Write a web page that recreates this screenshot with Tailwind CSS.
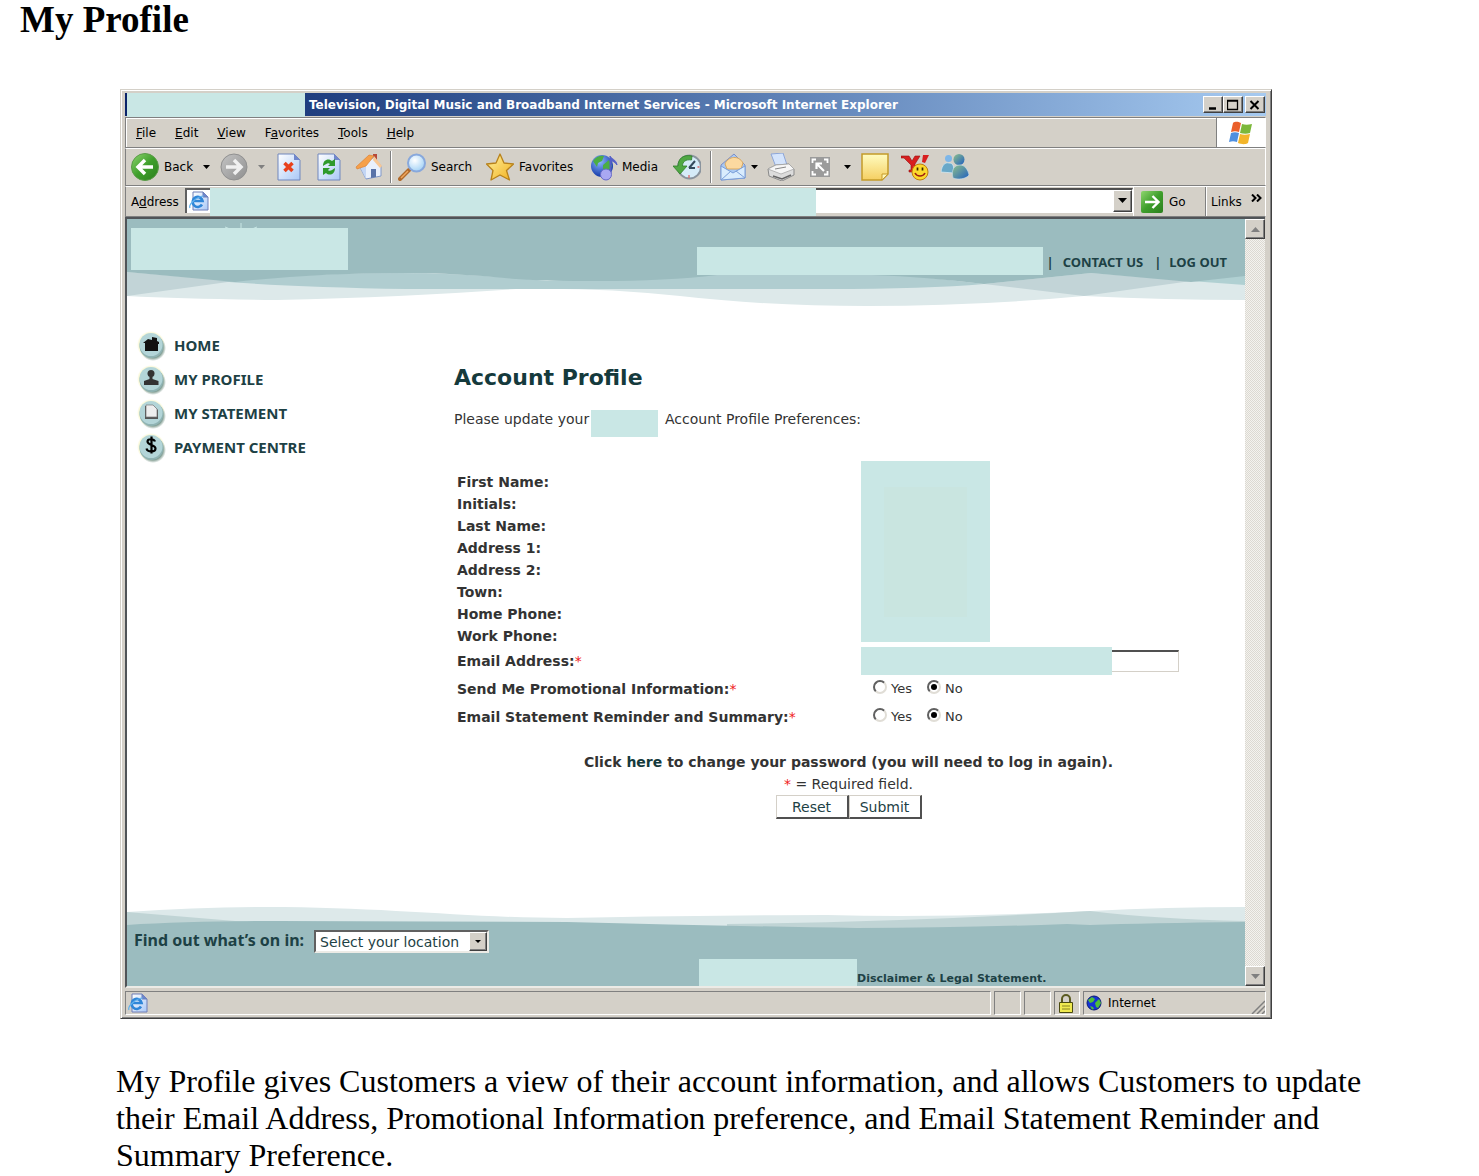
<!DOCTYPE html>
<html lang="en">
<head>
<meta charset="utf-8">
<title>My Profile</title>
<script src="https://cdn.jsdelivr.net/npm/@tailwindcss/browser@4"></script>
</head>
<body class="bg-white text-black">
<svg class="absolute h-0 w-0" aria-hidden="true">
  <defs>
    <linearGradient id="gGreen" x1="0" y1="0" x2="1" y2="1"><stop offset="0" stop-color="#8fd66f"/><stop offset=".5" stop-color="#3f9f2c"/><stop offset="1" stop-color="#2b7f1d"/></linearGradient>
    <linearGradient id="gGray" x1="0" y1="0" x2="1" y2="1"><stop offset="0" stop-color="#c4c4c4"/><stop offset="1" stop-color="#8f8f8f"/></linearGradient>
    <linearGradient id="gPage" x1="0" y1="0" x2="1" y2="1"><stop offset="0" stop-color="#ffffff"/><stop offset="1" stop-color="#a9c8f7"/></linearGradient>
    <linearGradient id="gGold" x1="0" y1="0" x2="1" y2="1"><stop offset="0" stop-color="#fff3a0"/><stop offset="1" stop-color="#f2b01e"/></linearGradient>
    <linearGradient id="gNote" x1="0" y1="0" x2="0" y2="1"><stop offset="0" stop-color="#fffcc0"/><stop offset="1" stop-color="#f5cf62"/></linearGradient>
    <radialGradient id="gGlobe" cx=".4" cy=".3" r=".7"><stop offset="0" stop-color="#8db9ff"/><stop offset="1" stop-color="#1238a8"/></radialGradient>
    <radialGradient id="gLens" cx=".4" cy=".35" r=".7"><stop offset="0" stop-color="#ffffff"/><stop offset="1" stop-color="#9fd0f5"/></radialGradient>
    <linearGradient id="gMan" x1="0" y1="0" x2="1" y2="1"><stop offset="0" stop-color="#8fc08a"/><stop offset="1" stop-color="#1f5fc0"/></linearGradient>
    <radialGradient id="gHalo"><stop offset=".8" stop-color="#f7f5c4"/><stop offset="1" stop-color="#f7f5c4" stop-opacity="0"/></radialGradient>
    <radialGradient id="gShade"><stop offset=".75" stop-color="#7f9b90"/><stop offset="1" stop-color="#7f9b90" stop-opacity="0"/></radialGradient>
    <pattern id="dots" width="2" height="2" patternUnits="userSpaceOnUse"><rect width="2" height="2" fill="#f4f3ef"/><rect width="1" height="1" fill="#dcd9d2"/><rect x="1" y="1" width="1" height="1" fill="#dcd9d2"/></pattern>
    <symbol id="iePage" viewBox="0 0 20 20">
      <path d="M4 1h10l5 5v13H4z" fill="url(#gPage)" stroke="#6f7fb8"/><path d="M14 1v5h5" fill="#6f86cc" stroke="#6f7fb8"/>
      <path d="M13 13.500a5 5 0 1 1 .6-3.500H4.500" fill="none" stroke="#2f86d8" stroke-width="2.600"/>
      <path d="M1 17C-1 13 9 5 15 5" fill="none" stroke="#5fb0ee" stroke-width="1.200"/>
    </symbol>
    <symbol id="disc" viewBox="0 0 30 30">
      <circle cx="14" cy="14" r="14" fill="url(#gHalo)"/><circle cx="16" cy="17" r="13" fill="url(#gShade)"/>
      <circle cx="14.500" cy="15" r="12" fill="#8fb3b3"/><circle cx="14" cy="13.500" r="11.500" fill="#b3d5d8"/>
    </symbol>
    <symbol id="globe" viewBox="0 0 16 16">
      <circle cx="8" cy="8" r="7" fill="#1433d6" stroke="#0b1d70"/><path d="M2 5l4-3 3 2-2 3-3 1zM9 8l4-4 2 4-3 5-2-1zM4 11l3 1 1 2-2 .5z" fill="#4fbf3a"/>
    </symbol>
  </defs>
</svg>

<h1 class="pl-5 font-['Liberation_Serif',serif] text-[37px] leading-[40px] font-bold">My Profile</h1>

<main class="mt-[49px] mr-[207px] ml-[120px] flex flex-col border border-t-[#d4d0c8] border-r-[#404040] border-b-[#404040] border-l-[#d4d0c8] bg-[#d4d0c8] px-1 pt-[3px] font-['DejaVu_Sans',sans-serif] text-[12px] shadow-[inset_1px_1px_0_#ffffff,inset_-1px_-1px_0_#808080]">

  <header class="mr-px flex h-[23px] items-center bg-linear-to-r from-[#0a246a] to-[#a6caf0]">
    <div class="ml-0.5 h-[25px] w-[178px] self-start bg-[#c9e7e5]"></div>
    <p class="ml-1 grow font-bold whitespace-nowrap text-white">Television, Digital Music and Broadband Internet Services - Microsoft Internet Explorer</p>
    <div class="mr-px flex text-black">
      <button aria-label="Minimize" class="flex h-[17px] w-5 items-center justify-center border border-t-white border-r-[#404040] border-b-[#404040] border-l-white bg-[#d4d0c8] shadow-[inset_-1px_-1px_0_#808080]"><svg class="h-3 w-3" viewBox="0 0 12 12"><path d="M2 9.500h7" stroke="#000" stroke-width="2.500"/></svg></button>
      <button aria-label="Maximize" class="flex h-[17px] w-5 items-center justify-center border border-t-white border-r-[#404040] border-b-[#404040] border-l-white bg-[#d4d0c8] shadow-[inset_-1px_-1px_0_#808080]"><svg class="h-3 w-3" viewBox="0 0 12 12"><path d="M.5 1.500h10v9H.5zM.5 2h10" fill="none" stroke="#000" stroke-width="1.300"/></svg></button>
      <button aria-label="Close" class="ml-0.5 flex h-[17px] w-5 items-center justify-center border border-t-white border-r-[#404040] border-b-[#404040] border-l-white bg-[#d4d0c8] shadow-[inset_-1px_-1px_0_#808080]"><svg class="h-3 w-3" viewBox="0 0 12 12"><path d="M1.500 2l8 8M9.500 2l-8 8" stroke="#000" stroke-width="2"/></svg></button>
    </div>
  </header>

  <nav aria-label="Menu bar" class="mt-px mr-px flex h-[31px] border border-[#808080] border-r-white">
    <div class="flex grow items-center gap-[19px] border-t border-l border-white pl-[9px]">
      <button><u>F</u>ile</button><button><u>E</u>dit</button><button><u>V</u>iew</button><button>F<u>a</u>vorites</button><button><u>T</u>ools</button><button><u>H</u>elp</button>
    </div>
    <div class="flex w-[49px] items-center justify-center border-l border-[#808080] bg-white">
      <svg class="h-6 w-6" viewBox="0 0 24 24"><path d="M4 2c3-2 5-1 8 0l-2 9c-3-1-5-1-8 0z" fill="#ea5f2a"/><path d="M13 3c3 1 6 1 10 0l-2 9c-3 1-6 1-10 0z" fill="#7cb83a"/><path d="M2 12c3-1 5-1 8 0l-2 9c-3-1-5-1-8 0z" fill="#4e8fe0"/><path d="M11 13c3 1 6 1 10 0l-2 9c-3 2-7 1-10 0z" fill="#f3b52a"/></svg>
    </div>
  </nav>

  <div role="toolbar" aria-label="Standard buttons" class="mr-px flex h-[38px] items-center border border-t-white border-r-white border-b-[#808080] border-l-[#808080] pl-[5px]">
    <button class="flex w-[69px] shrink-0 items-center gap-[5px]"><svg class="h-7 w-7 shrink-0" viewBox="0 0 28 28"><circle cx="14" cy="14" r="13.500" fill="url(#gGreen)" stroke="#5a9a48"/><path d="M22 14H8M14 7l-7 7 7 7" fill="none" stroke="#fff" stroke-width="3.500"/></svg>Back</button>
    <button aria-label="Back history" class="w-3 shrink-0"><svg class="mx-auto h-1 w-[7px]" viewBox="0 0 7 4"><path d="M0 0h7L3.500 4z"/></svg></button>
    <button aria-label="Forward" class="ml-2 shrink-0"><svg class="h-7 w-7" viewBox="0 0 28 28"><circle cx="14" cy="14" r="13" fill="url(#gGray)" stroke="#909090"/><path d="M6 14h14M14 7l7 7-7 7" fill="none" stroke="#f0f0f0" stroke-width="3.500"/></svg></button>
    <button aria-label="Forward history" class="ml-[7px] w-3 shrink-0"><svg class="mx-auto h-1 w-[7px]" viewBox="0 0 7 4"><path d="M0 0h7L3.500 4z" fill="#808080"/></svg></button>
    <button aria-label="Stop" class="ml-2 shrink-0"><svg class="h-7 w-7" viewBox="0 0 28 28"><path d="M3 1h16l6 6v20H3z" fill="url(#gPage)" stroke="#7187bd"/><path d="M19 1v6h6z" fill="#7187cc"/><path d="M9.500 10l8 8M17.500 10l-8 8" stroke="#e8401c" stroke-width="3.500"/></svg></button>
    <button aria-label="Refresh" class="ml-3 shrink-0"><svg class="h-7 w-7" viewBox="0 0 28 28"><path d="M3 1h16l6 6v20H3z" fill="url(#gPage)" stroke="#7187bd"/><path d="M19 1v6h6z" fill="#7187cc"/><path d="M8 13c0-7 6-8 9-5l3-2v7h-7l2-2c-2-2-4 0-7 2zM20 15c0 7-6 8-9 5l-3 2v-7h7l-2 2c2 2 4 0 7-2z" fill="#2f9a2c"/></svg></button>
    <button aria-label="Home" class="ml-3 shrink-0"><svg class="h-7 w-7" viewBox="0 0 28 28"><path d="M18 1h4v9h-4z" fill="#b5493a"/><path d="M5 14l6 12 15-3V13l-7-9z" fill="#e9f0fc" stroke="#8098c8"/><path d="M5 14l6 12V13z" fill="#c3d6f5"/><path d="M1 14L14 2l5 1-8 10-9 3z" fill="#f6a04a" stroke="#d8782a" stroke-width=".6"/><path d="M19 3l8 10-2 2-7-8z" fill="#f8c794"/><path d="M16 16h5v8l-5 1z" fill="#5973a8"/></svg></button>
    <div class="ml-[7px] h-8 w-0.5 border-r border-l border-r-white border-l-[#808080]"></div>
    <button class="ml-[6px] flex w-[82px] shrink-0 items-center gap-[5px]"><svg class="h-7 w-7 shrink-0" viewBox="0 0 28 28"><path d="M2 26l9-9" stroke="#b06a2c" stroke-width="4" stroke-linecap="round"/><path d="M3 25l7-7" stroke="#f0a860" stroke-width="1.500"/><circle cx="18.500" cy="10" r="8.500" fill="url(#gLens)" stroke="#88a8dc" stroke-width="2"/></svg>Search</button>
    <button class="ml-[6px] flex w-[98px] shrink-0 items-center gap-[5px]"><svg class="h-7 w-7 shrink-0" viewBox="0 0 28 28"><path d="M14 1l4 9 9.500 1-7 6.500 3 9.500-9.500-5-9 5 2-9.500L.5 11l9.500-1z" fill="url(#gGold)" stroke="#b8821c" stroke-width="1.300" stroke-linejoin="round"/></svg>Favorites</button>
    <button class="ml-[6px] flex w-[76px] shrink-0 items-center gap-1"><svg class="h-7 w-7 shrink-0" viewBox="0 0 28 28"><circle cx="12" cy="13" r="11" fill="url(#gGlobe)"/><path d="M3 8c3-5 8-6 11-5l-2 5-4 2-1 4zM13 12l6-5 3 6-5 7-4-2z" fill="#4cae43"/><path d="M20 20V3c1 3 6 3 7 9-2-3-4-4-6-4v12z" fill="#5560c8" stroke="#5560c8"/><circle cx="16" cy="21.500" r="5.500" fill="#a9a8f2" stroke="#6668c8"/></svg>Media</button>
    <button aria-label="History" class="ml-[7px] shrink-0"><svg class="h-7 w-7" viewBox="0 0 28 28"><circle cx="16.500" cy="14" r="11.500" fill="#d5ebf8" stroke="#8a949e" stroke-width="2"/><path d="M16 15l6-7M16 15h6" stroke="#344a5c" stroke-width="2"/><path d="M16 22v3M24.500 14h2" stroke="#d66" stroke-width="1.300"/><path d="M19 3C10 1 5 6 5 13H0l7 8 7-8H9.500c0-4 3-7 9-6z" fill="#50a844" stroke="#2f7d2a" stroke-width=".8"/></svg></button>
    <div class="ml-[9px] h-8 w-0.5 border-r border-l border-r-white border-l-[#808080]"></div>
    <button aria-label="Mail" class="ml-[7px] shrink-0"><svg class="h-7 w-7" viewBox="0 0 28 28"><path d="M2 12L15 1l11 11v13L2 27z" fill="#a9c8f2" stroke="#7b8fc8"/><path d="M6 11c3-8 14-9 18-1l-2 6H8z" fill="#fbd9a0" stroke="#d8a860"/><path d="M2 13l12 7 12-7v12L2 27z" fill="#d9ecfd" stroke="#7b9fd8"/><path d="M2 27l10-9M26 25l-9-7" stroke="#7b9fd8"/></svg></button>
    <button aria-label="Mail options" class="ml-px w-3 shrink-0"><svg class="mx-auto h-1 w-[7px]" viewBox="0 0 7 4"><path d="M0 0h7L3.500 4z"/></svg></button>
    <button aria-label="Print" class="ml-[7px] shrink-0"><svg class="h-7 w-7" viewBox="0 0 28 28"><path d="M4 1l12-1 4 12-11 2z" fill="#d4e4fc" stroke="#8da6d8"/><path d="M1 16l8-4 13-1 5 5v6l-12 6-13-5z" fill="#dcdcdc" stroke="#8a8a8a"/><path d="M1 16l13 5 13-5-5-5-13 1z" fill="#f6f6f6" stroke="#a0a0a0" stroke-width=".7"/><path d="M6 23l9 3 9-4" stroke="#666" fill="none" stroke-width="1.500"/><path d="M8 16l11-2" stroke="#888"/></svg></button>
    <button aria-label="Edit" class="ml-[11px] shrink-0"><svg class="h-7 w-7" viewBox="0 0 28 28"><path d="M4 4h20v20H4z" fill="#9b9b9b"/><path d="M6.500 10V6.500H10M18 6.500h3.500V10M21.500 18v3.500H18M10 21.500H6.500V18" fill="none" stroke="#fff" stroke-width="1.800"/><path d="M18 18L11 11M10.500 16v-5.500H16" fill="none" stroke="#fff" stroke-width="2.200"/></svg></button>
    <button aria-label="Edit options" class="ml-[7px] w-3 shrink-0"><svg class="mx-auto h-1 w-[7px]" viewBox="0 0 7 4"><path d="M0 0h7L3.500 4z"/></svg></button>
    <button aria-label="Discuss" class="ml-2 shrink-0"><svg class="h-7 w-7" viewBox="0 0 28 28"><path d="M1 1h26v20l-6 6H1z" fill="url(#gNote)" stroke="#c49a28" stroke-width="1.500"/><path d="M21 27v-6h6z" fill="#fff6b8" stroke="#c49a28"/></svg></button>
    <button aria-label="Messenger services" class="ml-3 shrink-0"><svg class="h-7 w-7" viewBox="0 0 28 28"><path d="M0 3h8l3 5 3-5h5l-5 8v6h3v2H8v-2h2v-5L3 5H0z" fill="#d81f1f" stroke="#981010" stroke-width=".6"/><path d="M22 2l6 0-4 8-3-1z" fill="#d81f1f"/><circle cx="19" cy="19" r="8" fill="#fbd92c" stroke="#c08010"/><path d="M16.500 14.500v3M21.500 14.500v3" stroke="#3a2a00" stroke-width="1.700"/><path d="M14 20c2 4 8 4 10 0" fill="none" stroke="#a02010" stroke-width="1.600"/></svg></button>
    <button aria-label="Messenger" class="ml-3 shrink-0"><svg class="h-7 w-7" viewBox="0 0 28 28"><circle cx="7.500" cy="5.500" r="3.500" fill="#7db6e8"/><path d="M0 19c1-7 4-10 8-9 4 0 5 3 5 10z" fill="#69a8c8" stroke="#d8eef8" stroke-width=".7"/><circle cx="18" cy="6.500" r="5.500" fill="url(#gMan)"/><path d="M12 25c-2-8 1-13 7-13 5 0 8 5 9 10-3 4-11 5-16 3z" fill="url(#gMan)" stroke="#c8e0f0" stroke-width=".6"/></svg></button>
  </div>

  <form class="mr-px flex h-[31px] items-center border border-t-white border-r-white border-b-[#808080] border-l-[#808080]" onsubmit="return false">
    <label for="address" class="w-[59px] pl-[5px]">A<u>d</u>dress</label>
    <div class="flex h-7 grow items-start">
      <div class="flex h-[25px] w-[25px] items-center justify-center border-t-2 border-l-2 border-[#606060] bg-white"><svg class="h-5 w-5"><use href="#iePage"/></svg></div>
      <div class="h-7 w-[606px] bg-[#c9e7e5]"></div>
      <div class="flex h-[25px] grow border-t-2 border-r border-b border-t-[#505050] border-r-white border-b-white bg-white">
        <input id="address" type="text" class="h-full w-0 grow outline-none">
        <button aria-label="Show addresses" class="flex w-[19px] items-center justify-center border border-t-white border-r-[#404040] border-b-[#404040] border-l-white bg-[#d4d0c8] shadow-[inset_-1px_-1px_0_#808080]"><svg class="h-[5px] w-[9px]" viewBox="0 0 9 5"><path d="M0 0h9L4.500 5z"/></svg></button>
      </div>
    </div>
    <div class="flex h-full w-[72px] items-center gap-[6px] border-l border-white pl-[7px]">
      <svg class="h-[22px] w-[22px] shrink-0" viewBox="0 0 22 22"><rect width="22" height="22" rx="2" fill="url(#gGreen)"/><path d="M4 11h13M11.500 5l6 6-6 6" fill="none" stroke="#fff" stroke-width="2.400"/></svg><button>Go</button>
    </div>
    <div class="flex h-full w-[60px] items-center gap-[9px] border-l border-[#808080] pl-[5px] shadow-[inset_1px_0_0_#ffffff]">
      <span>Links</span><svg class="mb-2 h-2 w-[11px] shrink-0" viewBox="0 0 11 8"><path d="M1 .5L4.500 4 1 7.500M6 .5L9.500 4 6 7.500" fill="none" stroke="#000" stroke-width="2"/></svg>
    </div>
  </form>

  <div class="mr-0.5 flex border-t-2 border-b-2 border-l-2 border-t-[#505458] border-b-[#ecebe6] border-l-[#505458] bg-white">
    <div class="flex min-w-0 grow flex-col">
      <div class="relative h-[87px]">
        <svg class="absolute inset-0 h-full w-full" viewBox="0 0 1118 87" preserveAspectRatio="none">
          <path d="M0 0H1118V81Q1040 81 957 77Q850 87 740 87 640 87 553 77 470 68 389 70 280 78 150 81 60 80 0 77z" fill="#dde9ea"/>
          <path d="M0 53L108 62 0 77z" fill="#c2d4d7"/>
          <path d="M90 62Q190 54 273 54 340 54 420 62L553 54H760L857 65Q800 70 700 70H280Q160 68 90 62z" fill="#b0cdd0"/>
          <path d="M857 65L964 54 1064 62 957 77z" fill="#c2d4d7"/>
          <path d="M1050 61L1118 56V66z" fill="#b0d0d2"/>
          <path d="M0 0H1118V57L1064 63 964 54 857 65Q800 58 745 56L590 56Q540 62 470 62 420 62 389 60 320 53 273 54 190 54 108 63L0 53z" fill="#9bbcbf"/>
          <path d="M98 8l5 2M114 4v7M125 10l5-2" stroke="#c9e7e5"/>
        </svg>
        <div class="relative flex h-full justify-between pr-[18px]">
          <div class="mt-[9px] ml-1 h-[42px] w-[217px] bg-[#c9e7e5]"></div>
          <div class="mt-7 flex h-7 items-center font-['Noto_Sans',sans-serif] text-[13px] leading-7 font-bold text-[#1d4145]">
            <div class="h-7 w-[346px] bg-[#c9e7e5]"></div>
            <div class="flex pt-0.5 pl-[3px]"><span>|</span><a href="#" class="mr-[11px] ml-[9px]">CONTACT US</a><span>|</span><a href="#" class="ml-2">LOG OUT</a></div>
          </div>
        </div>
      </div>

      <div class="flex min-h-[600px]">
        <nav aria-label="Account" class="w-[327px] shrink-0 pt-[23px] pl-[10px] font-['Noto_Sans',sans-serif] text-[15px] font-bold text-[#1d4145]">
          <a href="#" class="flex h-[34px] items-start gap-[7px]"><svg class="mt-0.5 h-[30px] w-[30px]" viewBox="0 0 30 30"><use href="#disc"/><path d="M6 12l5-4 4 1V6l5 1v3l2 1v2h-1v7H8v-8z" fill="#111"/></svg><span class="leading-8">HOME</span></a>
          <a href="#" class="flex h-[34px] items-start gap-[7px]"><svg class="mt-0.5 h-[30px] w-[30px]" viewBox="0 0 30 30"><use href="#disc"/><circle cx="14" cy="8.500" r="3.500" fill="#333"/><path d="M12.500 10h3v4l6 2v4H7v-4l5.500-2z" fill="#333"/></svg><span class="leading-8">MY PROFILE</span></a>
          <a href="#" class="flex h-[34px] items-start gap-[7px]"><svg class="mt-0.5 h-[30px] w-[30px]" viewBox="0 0 30 30"><use href="#disc"/><path d="M8 7h9l4 4v9H8z" fill="#555"/><path d="M9 6h7l4 4v8H9z" fill="#eee" stroke="#777" stroke-width=".7"/></svg><span class="leading-8">MY STATEMENT</span></a>
          <a href="#" class="flex h-[34px] items-start gap-[7px]"><svg class="mt-0.5 h-[30px] w-[30px]" viewBox="0 0 30 30"><use href="#disc"/><path d="M18 8.500c-1-3-7.500-3-7.500 0 0 4 8 3 8 7 0 4-8 4-9 0M14.500 3.500v17" fill="none" stroke="#000" stroke-width="2.200"/></svg><span class="leading-8">PAYMENT CENTRE</span></a>
        </nav>

        <form class="min-w-0 grow text-[14px] text-[#333333]" onsubmit="return false">
          <h2 class="pt-[58px] text-[22px] leading-7 font-bold text-[#153a3c]">Account Profile</h2>
          <p class="mt-4 flex h-[27px] leading-[22px] whitespace-nowrap"><span class="w-[137px]">Please update your</span><span class="mt-0.5 mr-[7px] h-[27px] w-[67px] bg-[#c9e7e5]"></span>Account Profile Preferences:</p>
          <table class="mt-9 w-full border-collapse text-left leading-[22px]">
            <tbody class="[&_th]:p-0 [&_th]:pl-[3px] [&_th]:font-bold [&_td]:p-0">
              <tr class="h-[22px]"><th scope="row" class="w-[407px]">First Name:</th><td rowspan="8" class="relative"><div class="absolute -top-[10px] flex h-[181px] w-[129px] items-center justify-center bg-[#c9e7e5]"><div class="h-[130px] w-[83px] bg-[#c9e5e0]"></div></div></td></tr>
              <tr class="h-[22px]"><th scope="row">Initials:</th></tr>
              <tr class="h-[22px]"><th scope="row">Last Name:</th></tr>
              <tr class="h-[22px]"><th scope="row">Address 1:</th></tr>
              <tr class="h-[22px]"><th scope="row">Address 2:</th></tr>
              <tr class="h-[22px]"><th scope="row">Town:</th></tr>
              <tr class="h-[22px]"><th scope="row">Home Phone:</th></tr>
              <tr class="h-[22px]"><th scope="row">Work Phone:</th></tr>
              <tr class="h-[28px]"><th scope="row"><label for="email">Email Address:<span class="font-normal text-[#f02020]">*</span></label></th><td><div class="flex items-center"><div class="h-7 w-[251px] bg-[#c9e7e5]"></div><input id="email" type="text" class="h-[22px] w-[67px] border-t-2 border-r border-b border-t-[#505050] border-r-[#d4d0c8] border-b-[#d4d0c8] bg-white"></div></td></tr>
              <tr class="h-[28px]"><th scope="row">Send Me Promotional Information:<span class="font-normal text-[#f02020]">*</span></th><td>
                <div class="flex items-center pl-3 text-[13px]">
                  <input id="p1" name="promo" type="radio" class="mr-1 mb-1 h-[14px] w-[14px] appearance-none rounded-full border-2 border-t-[#606060] border-r-[#e0ddd6] border-b-[#e0ddd6] border-l-[#606060] checked:bg-black checked:bg-clip-content checked:p-0.5"><label for="p1" class="w-9">Yes</label>
                  <input id="p2" name="promo" type="radio" checked class="mr-1 mb-1 h-[14px] w-[14px] appearance-none rounded-full border-2 border-t-[#606060] border-r-[#e0ddd6] border-b-[#e0ddd6] border-l-[#606060] checked:bg-black checked:bg-clip-content checked:p-0.5"><label for="p2">No</label>
                </div></td></tr>
              <tr class="h-[27px]"><th scope="row">Email Statement Reminder and Summary:<span class="font-normal text-[#f02020]">*</span></th><td>
                <div class="flex items-center pl-3 text-[13px]">
                  <input id="s1" name="summary" type="radio" class="mr-1 mb-1 h-[14px] w-[14px] appearance-none rounded-full border-2 border-t-[#606060] border-r-[#e0ddd6] border-b-[#e0ddd6] border-l-[#606060] checked:bg-black checked:bg-clip-content checked:p-0.5"><label for="s1" class="w-9">Yes</label>
                  <input id="s2" name="summary" type="radio" checked class="mr-1 mb-1 h-[14px] w-[14px] appearance-none rounded-full border-2 border-t-[#606060] border-r-[#e0ddd6] border-b-[#e0ddd6] border-l-[#606060] checked:bg-black checked:bg-clip-content checked:p-0.5"><label for="s2">No</label>
                </div></td></tr>
            </tbody>
          </table>
          <div class="mt-[21px] pr-0.5 text-center leading-[22px]">
            <p class="font-bold">Click <a href="#" class="text-[#153a3c]">here</a> to change your password (you will need to log in again).</p>
            <p><span class="text-[#f02020]">*</span> = Required field.</p>
            <div class="flex justify-center">
              <button type="reset" class="h-6 w-[73px] border border-t-[#d4d0c8] border-r-2 border-r-[#505050] border-b-2 border-b-[#505050] border-l-[#d4d0c8] bg-white leading-5 text-[#1d4145]">Reset</button>
              <button type="submit" class="h-6 w-[73px] border border-t-[#d4d0c8] border-r-2 border-r-[#505050] border-b-2 border-b-[#505050] border-l-[#d4d0c8] bg-white leading-5 text-[#1d4145]">Submit</button>
            </div>
          </div>
        </form>
      </div>

      <footer class="relative h-[80px] text-[#1d4145]">
        <svg class="absolute inset-0 h-full w-full" viewBox="0 0 1118 80" preserveAspectRatio="none">
          <path d="M0 6Q70 1 139 1C260 1 340 12 440 12Q600 9 700 9 820 12 963 5 1040 1 1118 1V80H0z" fill="#dde9ea"/>
          <path d="M0 6L120 16V20H0z" fill="#c0d4d5"/>
          <path d="M600 18Q780 16 963 5 1030 13 1118 15V24H600z" fill="#c0d4d5"/>
          <path d="M0 19Q60 15 150 15L440 16Q600 20 730 22 830 22 940 18L963 19Q1020 17 1118 16V80H0z" fill="#9bbcbf"/>
        </svg>
        <div class="relative flex h-full flex-col justify-between">
          <div class="flex items-start pt-6 pl-[7px]">
            <label for="loc" class="w-[180px] font-['Noto_Sans',sans-serif] text-[16px] leading-5 font-bold">Find out what’s on in:</label>
            <div class="relative h-[23px] w-[175px] border-2 border-t-[#606060] border-r-[#ecebe6] border-b-[#ecebe6] border-l-[#606060] bg-white">
              <select id="loc" class="h-full w-full appearance-none pl-1 text-[14px] leading-[18px] outline-none"><option>Select your location</option></select>
              <div class="pointer-events-none absolute inset-y-0 right-0 flex w-[18px] items-center justify-center border border-t-white border-r-[#404040] border-b-[#404040] border-l-white bg-[#d4d0c8] shadow-[inset_-1px_-1px_0_#808080]"><svg class="h-[3px] w-[6px]" viewBox="0 0 6 3"><path d="M0 0h6L3 3z"/></svg></div>
            </div>
          </div>
          <div class="flex items-end justify-end pr-[201px]">
            <div class="h-[27px] w-[158px] bg-[#c9e7e5]"></div>
            <a href="#" class="w-[187px] text-[11px] leading-[15px] font-bold whitespace-nowrap">Disclaimer &amp; Legal Statement.</a>
          </div>
        </div>
      </footer>
    </div>
    <div class="flex w-5 shrink-0 flex-col">
      <button aria-label="Scroll up" class="flex h-5 shrink-0 items-center justify-center border border-t-white border-r-[#404040] border-b-[#404040] border-l-white bg-[#d4d0c8] shadow-[inset_-1px_-1px_0_#808080]"><svg class="h-[5px] w-[9px]" viewBox="0 0 9 5"><path d="M0 5h9L4.500 0z" fill="#808080"/></svg></button>
      <svg class="min-h-0 w-full grow"><rect width="100%" height="100%" fill="url(#dots)"/></svg>
      <button aria-label="Scroll down" class="flex h-5 shrink-0 items-center justify-center border border-t-white border-r-[#404040] border-b-[#404040] border-l-white bg-[#d4d0c8] shadow-[inset_-1px_-1px_0_#808080]"><svg class="h-[5px] w-[9px]" viewBox="0 0 9 5"><path d="M0 0h9L4.500 5z" fill="#808080"/></svg></button>
    </div>
  </div>

  <footer class="mt-[3px] mr-px mb-[3px] flex h-6 gap-[3px]">
    <div class="flex grow items-center border border-t-[#808080] border-r-white border-b-white border-l-[#808080] pl-0.5"><svg class="h-5 w-5"><use href="#iePage"/></svg></div>
    <div class="w-[27px] border border-t-[#808080] border-r-white border-b-white border-l-[#808080]"></div>
    <div class="w-[27px] border border-t-[#808080] border-r-white border-b-white border-l-[#808080]"></div>
    <div class="flex w-[26px] items-center border border-t-[#808080] border-r-white border-b-white border-l-[#808080] pl-[3px]"><svg class="h-[19px] w-4" viewBox="0 0 16 19"><path d="M4 9V5a4 4 0 0 1 8 0v4" fill="none" stroke="#5a5a20" stroke-width="2"/><path d="M1.500 8.500h13v10h-13z" fill="#f0ea50" stroke="#4a4a10"/><path d="M4 12h8M4 15h8" stroke="#8a8420"/></svg></div>
    <div class="flex w-[183px] items-center gap-[6px] border border-t-[#808080] border-r-white border-b-white border-l-[#808080] pl-0.5"><svg class="h-4 w-4"><use href="#globe"/></svg><span class="grow">Internet</span><svg class="h-[14px] w-[14px] self-end" viewBox="0 0 14 14"><path d="M1 14L14 1M6 14l8-8M11 14l3-3" stroke="#808080" stroke-width="1.500"/></svg></div>
  </footer>
</main>

<p class="mt-[44px] mr-[100px] ml-[116px] font-['Liberation_Serif',serif] text-[32px] leading-[37px]">My Profile gives Customers a view of their account information, and allows Customers to update their Email Address, Promotional Information preference, and Email Statement Reminder and Summary Preference.</p>
</body>
</html>
